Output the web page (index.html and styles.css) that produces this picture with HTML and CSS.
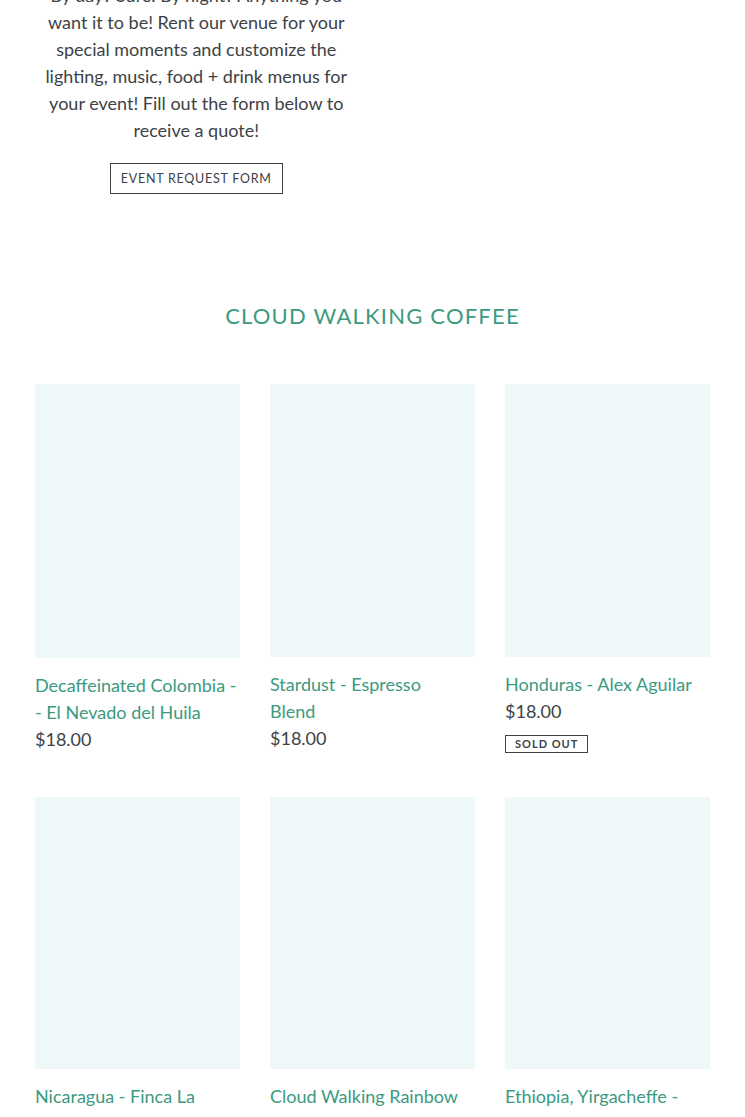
FILE: index.html
```html
<!DOCTYPE html>
<html lang="en">
<head>
<meta charset="utf-8">
<title>Cloud Walking Coffee</title>
<link rel="stylesheet" href="styles.css">
</head>
<body>
<div class="page">
  <section class="intro">
    <div class="intro-text">
      <p>By day? Sure. By night? Anything you want it to be! Rent our venue for your special moments and customize the lighting, music, food + drink menus for your event! Fill out the form below to receive a quote!</p>
      <a class="btn" href="#">Event Request Form</a>
    </div>
    <div class="intro-media"></div>
  </section>

  <h2 class="section-title">Cloud Walking Coffee</h2>

  <div class="grid">
    <div class="card">
      <div class="thumb t1"></div>
      <a class="title" href="#">Decaffeinated Colombia - - El Nevado del Huila</a>
      <div class="price">$18.00</div>
    </div>
    <div class="card">
      <div class="thumb"></div>
      <a class="title" href="#">Stardust - Espresso<br>Blend</a>
      <div class="price">$18.00</div>
    </div>
    <div class="card">
      <div class="thumb"></div>
      <a class="title" href="#">Honduras - Alex Aguilar</a>
      <div class="price">$18.00</div>
      <span class="badge">Sold out</span>
    </div>
    <div class="card">
      <div class="thumb t2"></div>
      <a class="title" href="#">Nicaragua - Finca La Bendición</a>
      <div class="price">$18.00</div>
    </div>
    <div class="card">
      <div class="thumb t2"></div>
      <a class="title" href="#">Cloud Walking Rainbow 2019 Cold Brew</a>
      <div class="price">$18.00</div>
    </div>
    <div class="card">
      <div class="thumb t2"></div>
      <a class="title" href="#">Ethiopia, Yirgacheffe - Konga Natural</a>
      <div class="price">$18.00</div>
    </div>
  </div>
</div>
</body>
</html>
```

FILE: styles.css
```css
html, body {
  margin: 0;
  padding: 0;
  background: #ffffff;
}
body {
  font-family: Lato, "Noto Sans", "Liberation Sans", sans-serif;
  color: #3d4246;
  overflow: hidden;
}
.page {
  padding: 0 35px;
}
.intro {
  display: grid;
  grid-template-columns: 1fr 1fr;
  gap: 30px;
  margin-top: -18px;
}
.intro-text {
  display: flex;
  flex-direction: column;
  align-items: center;
  text-align: center;
}
.intro-text p {
  margin: 0;
  font-size: 18px;
  line-height: 27px;
  color: #3d4246;
}
.btn {
  margin-top: 19px;
  display: inline-block;
  border: 1px solid #3d4246;
  padding: 0 10px;
  height: 29px;
  line-height: 29px;
  font-size: 12.5px;
  letter-spacing: 0.75px;
  text-transform: uppercase;
  color: #3d4246;
  text-decoration: none;
}
.section-title {
  margin: 107px 0 0;
  text-align: center;
  font-weight: 400;
  font-size: 22px;
  line-height: 30px;
  letter-spacing: 1.2px;
  text-transform: uppercase;
  color: #3b9a80;
}
.grid {
  margin-top: 53px;
  display: grid;
  grid-template-columns: repeat(3, 1fr);
  column-gap: 30px;
  row-gap: 44px;
  align-items: start;
}
.card {
  display: flex;
  flex-direction: column;
  align-items: flex-start;
}
.thumb {
  width: 100%;
  height: 273px;
  background: #eff8f8;
}
.thumb.t1 { height: 274px; }
.thumb.t2 { height: 272px; }
.title {
  margin-top: 14px;
  font-size: 18px;
  line-height: 27px;
  color: #3b9a80;
  text-decoration: none;
}
.price {
  font-size: 18px;
  line-height: 27px;
  color: #3d4246;
}
.badge {
  margin-top: 10px;
  border: 1px solid #3d4246;
  padding: 0 9px;
  height: 16px;
  line-height: 16px;
  font-size: 11px;
  font-weight: 700;
  letter-spacing: 1px;
  text-transform: uppercase;
  color: #3d4246;
}
```
